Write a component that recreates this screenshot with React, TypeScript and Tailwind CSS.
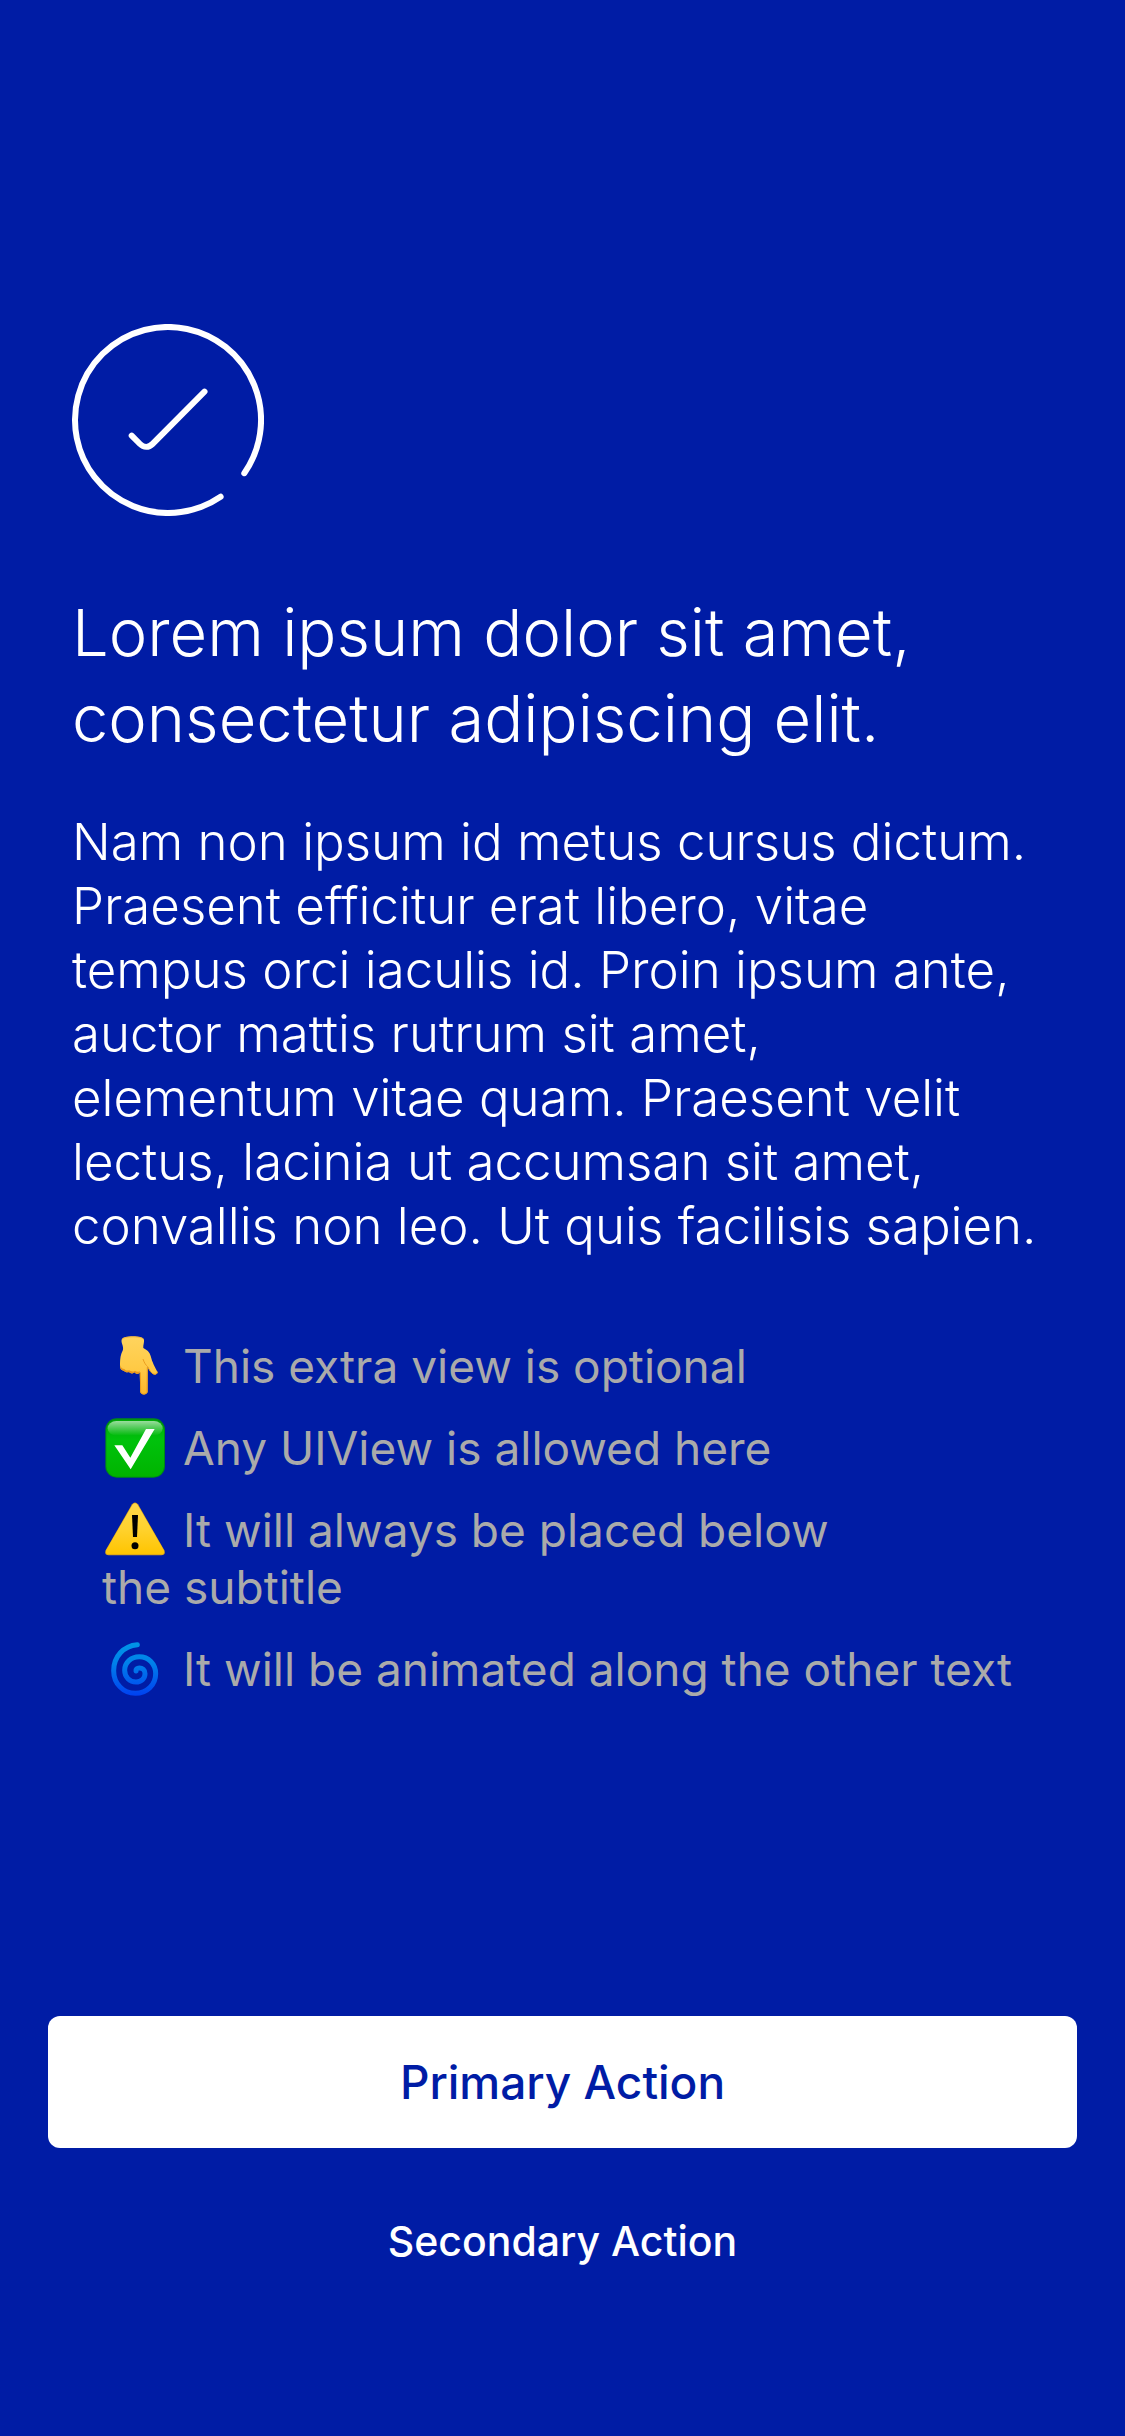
import type { ReactNode } from "react";

const emojiClass = "-my-2 ml-px mr-4 inline-block h-[60px] w-16 align-[-5px]";

function SuccessIcon() {
  return (
    <svg viewBox="-96 -96 192 192" className="size-48" fill="none" stroke="currentColor" strokeWidth="6" strokeLinecap="round" strokeLinejoin="round" role="img" aria-label="Success">
      <path d="M76.3 53.2A93 93 0 1 0 52.6 76.7" />
      <path d="M-36.3 15.7L-28 24C-24.3 27.7 -19.3 27.7 -15.5 24L36.5 -28.3" />
    </svg>
  );
}

function PointingDown() {
  return (
    <svg viewBox="39 51 192 180" className={emojiClass} aria-hidden="true">
      <defs>
        <linearGradient id="hand" x1="0" y1="0" x2="0" y2="1">
          <stop offset="0" stopColor="#ffd45e" />
          <stop offset="0.55" stopColor="#ffca45" />
          <stop offset="1" stopColor="#fdb72a" />
        </linearGradient>
      </defs>
      <path d="M95 62C97 49 159 48 162 62C163 71 159 78 160 87C170 92 179 99 182 111C186 130 196 146 202 158C204 166 194 170 187 163C180 157 176 149 173 143L173 219C172 229 152 229 151 219L149 160C146 166 138 166 134 160C129 165 121 164 117 159C109 161 104 158 101 155C93 154 90 149 90 142C90 130 90 116 94 104C97 96 100 94 99 85C98 76 93 71 95 62Z" fill="url(#hand)" />
      <path d="M90 138C90 149 94 154 101 155C104 158 109 161 117 159C121 164 129 165 134 160C138 166 146 166 149 160L149 156C144 160 139 159 135 155C130 159 122 158 118 154C111 156 107 154 103 150C96 150 92 145 90 138Z" fill="#e8981d" />
      <path d="M151 160L152 219C154 227 169 228 171 218L172 144M159 120C163 132 168 139 173 143C178 155 184 162 190 165C197 168 203 164 202 158" fill="none" stroke="#eb9f20" strokeWidth="3" />
      <path d="M96 61C101 51 157 51 161 61" fill="none" stroke="#e9a62f" strokeWidth="2" />
    </svg>
  );
}

function CheckBox() {
  return (
    <svg viewBox="39 57 192 180" className={emojiClass} aria-hidden="true">
      <defs>
        <linearGradient id="box" x1="0" y1="0" x2="0" y2="1">
          <stop offset="0" stopColor="#00a808" />
          <stop offset="0.35" stopColor="#00c20c" />
          <stop offset="1" stopColor="#00b400" />
        </linearGradient>
        <linearGradient id="gloss" x1="0" y1="0" x2="0" y2="1">
          <stop offset="0" stopColor="#fff" stopOpacity="0.6" />
          <stop offset="1" stopColor="#fff" stopOpacity="0" />
        </linearGradient>
      </defs>
      <rect x="46" y="58" width="179" height="178" rx="34" fill="#008a16" />
      <rect x="49" y="62" width="173" height="171" rx="31" fill="url(#box)" />
      <rect x="53" y="66" width="165" height="44" rx="26" fill="url(#gloss)" />
      <path d="M73 139H97L121 176L168 90H194L122 211Z" fill="#fff" />
    </svg>
  );
}

function Warning() {
  return (
    <svg viewBox="39 48 192 180" className={emojiClass} aria-hidden="true">
      <defs>
        <linearGradient id="warn" x1="0" y1="0" x2="0" y2="1">
          <stop offset="0" stopColor="#ffd84a" />
          <stop offset="0.5" stopColor="#ffd22e" />
          <stop offset="1" stopColor="#ffc400" />
        </linearGradient>
      </defs>
      <path d="M126 61Q135 50 144 61L223 199Q228 213 214 214H56Q42 213 47 199Z" fill="#d8a21c" />
      <path d="M127 63Q135 53 143 63L221 198Q226 210 213 211H57Q44 210 49 198Z" fill="url(#warn)" />
      <path d="M126 93H144L141 159H129Z" fill="#000" />
      <circle cx="135" cy="185" r="10.5" fill="#000" />
    </svg>
  );
}

function Cyclone() {
  return (
    <svg viewBox="39 60 192 180" className={emojiClass} aria-hidden="true">
      <defs>
        <linearGradient id="swirl" gradientUnits="userSpaceOnUse" x1="0" y1="68" x2="0" y2="231">
          <stop offset="0" stopColor="#0096e6" />
          <stop offset="0.4" stopColor="#0080ea" />
          <stop offset="1" stopColor="#0040f0" />
        </linearGradient>
      </defs>
      <path d="M142 77C101 80 71 113 71 155C71 194 100 223 136 223C171 223 197 197 197 164C197 134 175 113 148 113C123 113 104 131 104 154C104 174 119 189 138 189C154 189 165 178 165 164C165 153 157 147 148 147C141 147 137 151 138 156" fill="none" stroke="url(#swirl)" strokeWidth="15" strokeLinecap="round" />
    </svg>
  );
}

const notes: { icon: ReactNode; text: ReactNode }[] = [
  { icon: <PointingDown />, text: "This extra view is optional" },
  { icon: <CheckBox />, text: "Any UIView is allowed here" },
  { icon: <Warning />, text: <>It will always be placed below<br />the subtitle</> },
  { icon: <Cyclone />, text: "It will be animated along the other text" },
];

export default function App() {
  return (
    <main className="flex min-h-screen flex-col bg-[#001ca5] px-12 pt-[324px] pb-32 font-['Inter',sans-serif] text-white">
      <div className="px-6">
        <SuccessIcon />
        <h1 className="mt-[74px] text-[65px] leading-[86px] font-light">
          Lorem ipsum dolor sit amet,<br />
          consectetur adipiscing elit.
        </h1>
        <p className="mt-12 text-[51px] leading-[64px] font-light">
          Nam non ipsum id metus cursus dictum.<br />
          Praesent efficitur erat libero, vitae<br />
          tempus orci iaculis id. Proin ipsum ante,<br />
          auctor mattis rutrum sit amet,<br />
          elementum vitae quam. Praesent velit<br />
          lectus, lacinia ut accumsan sit amet,<br />
          convallis non leo. Ut quis facilisis sapien.
        </p>
        <ul className="mt-20 flex flex-col gap-[25px] pl-[30px] text-[46px] leading-[57px] text-[#aaaaaa]">
          {notes.map((note, index) => (
            <li key={index}>
              {note.icon}
              {note.text}
            </li>
          ))}
        </ul>
      </div>
      <div className="mt-auto flex flex-col gap-7">
        <button type="button" className="h-[132px] rounded-xl bg-white text-[46px] font-medium text-[#001ca5]">
          Primary Action
        </button>
        <button type="button" className="h-[132px] rounded-xl text-[41px] font-medium">
          Secondary Action
        </button>
      </div>
    </main>
  );
}
